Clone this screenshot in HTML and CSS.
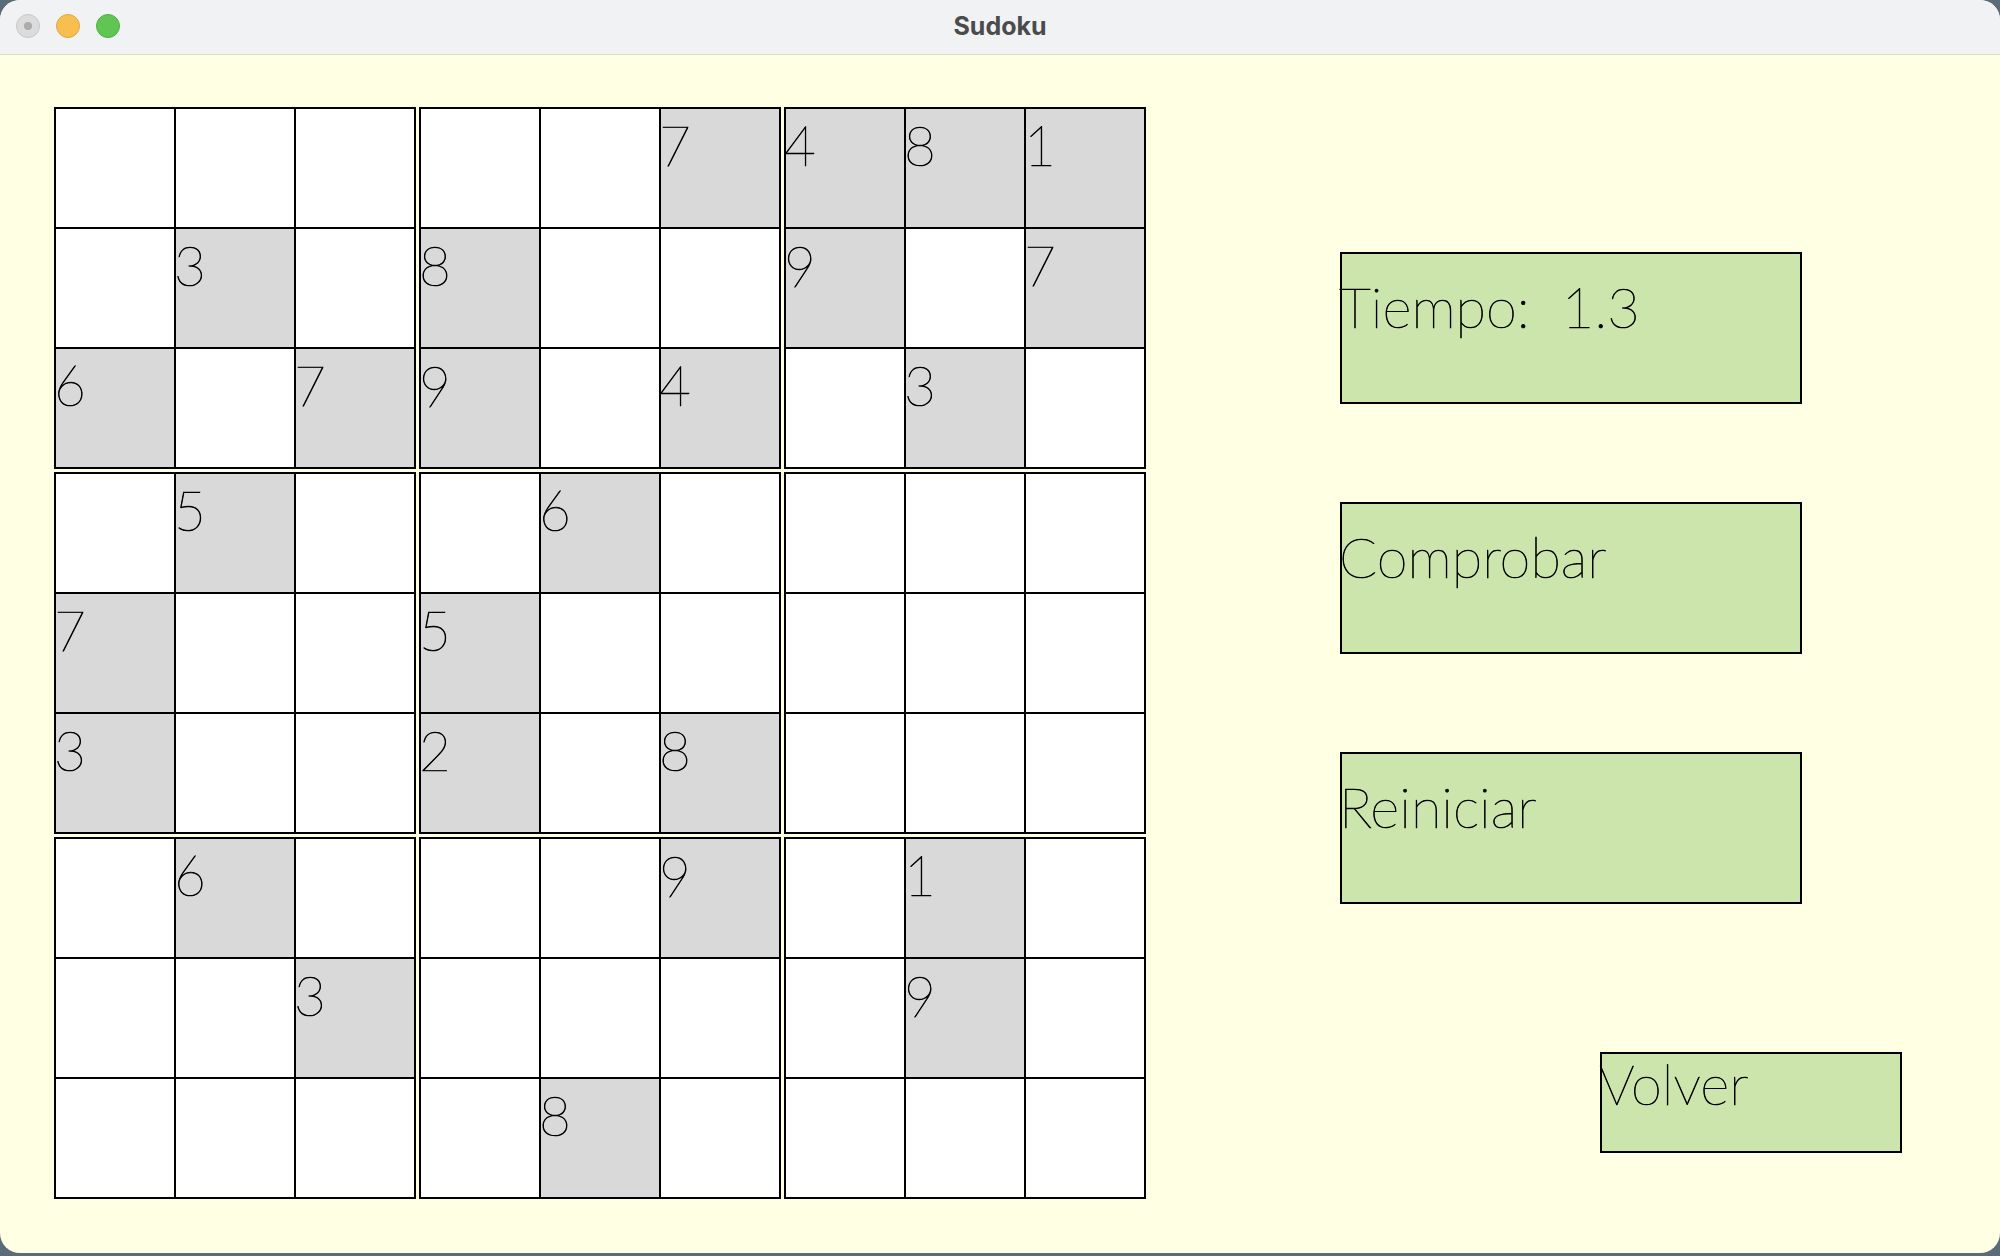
FILE: index.html
```html
<!DOCTYPE html>
<html lang="es">
<head>
<meta charset="utf-8">
<title>Sudoku</title>
<link rel="stylesheet" href="styles.css">
</head>
<body>
<div class="window">
  <div class="titlebar">
    <div class="lights">
      <span class="light close"><span class="dot"></span></span>
      <span class="light min"></span>
      <span class="light max"></span>
    </div>
    <div class="title">Sudoku</div>
  </div>
  <div class="content">
    <div class="board">
      <div class="block">
        <div class="cell"></div><div class="cell"></div><div class="cell"></div>
        <div class="cell"></div><div class="cell given">3</div><div class="cell"></div>
        <div class="cell given">6</div><div class="cell"></div><div class="cell given">7</div>
      </div>
      <div class="block">
        <div class="cell"></div><div class="cell"></div><div class="cell given">7</div>
        <div class="cell given">8</div><div class="cell"></div><div class="cell"></div>
        <div class="cell given">9</div><div class="cell"></div><div class="cell given">4</div>
      </div>
      <div class="block">
        <div class="cell given">4</div><div class="cell given">8</div><div class="cell given">1</div>
        <div class="cell given">9</div><div class="cell"></div><div class="cell given">7</div>
        <div class="cell"></div><div class="cell given">3</div><div class="cell"></div>
      </div>
      <div class="block">
        <div class="cell"></div><div class="cell given">5</div><div class="cell"></div>
        <div class="cell given">7</div><div class="cell"></div><div class="cell"></div>
        <div class="cell given">3</div><div class="cell"></div><div class="cell"></div>
      </div>
      <div class="block">
        <div class="cell"></div><div class="cell given">6</div><div class="cell"></div>
        <div class="cell given">5</div><div class="cell"></div><div class="cell"></div>
        <div class="cell given">2</div><div class="cell"></div><div class="cell given">8</div>
      </div>
      <div class="block">
        <div class="cell"></div><div class="cell"></div><div class="cell"></div>
        <div class="cell"></div><div class="cell"></div><div class="cell"></div>
        <div class="cell"></div><div class="cell"></div><div class="cell"></div>
      </div>
      <div class="block">
        <div class="cell"></div><div class="cell given">6</div><div class="cell"></div>
        <div class="cell"></div><div class="cell"></div><div class="cell given">3</div>
        <div class="cell"></div><div class="cell"></div><div class="cell"></div>
      </div>
      <div class="block">
        <div class="cell"></div><div class="cell"></div><div class="cell given">9</div>
        <div class="cell"></div><div class="cell"></div><div class="cell"></div>
        <div class="cell"></div><div class="cell given">8</div><div class="cell"></div>
      </div>
      <div class="block">
        <div class="cell"></div><div class="cell given">1</div><div class="cell"></div>
        <div class="cell"></div><div class="cell given">9</div><div class="cell"></div>
        <div class="cell"></div><div class="cell"></div><div class="cell"></div>
      </div>
    </div>
    <div class="panel">
      <div class="box timer">Tiempo:&nbsp;&nbsp;1.3</div>
      <div class="box action">Comprobar</div>
      <div class="box action">Reiniciar</div>
      <div class="box back">Volver</div>
    </div>
  </div>
</div>
</body>
</html>
```

FILE: styles.css
```css
html, body {
  margin: 0;
  padding: 0;
}
body {
  width: 2000px;
  height: 1256px;
  background: #5a6b79;
  overflow: hidden;
}
.window {
  width: 2000px;
  height: 1253px;
  border-radius: 20px;
  overflow: hidden;
  background: #ffffe3;
  display: flex;
  flex-direction: column;
}
.titlebar {
  height: 54px;
  flex: none;
  background: #f1f2f4;
  border-bottom: 1px solid #dcdcc8;
  display: flex;
  align-items: center;
  justify-content: center;
  position: relative;
}
.lights {
  position: absolute;
  left: 16px;
  top: 14px;
  display: flex;
  gap: 16px;
}
.light {
  width: 24px;
  height: 24px;
  border-radius: 50%;
  box-sizing: border-box;
  display: flex;
  align-items: center;
  justify-content: center;
}
.light.close {
  background: #dcdcdc;
  border: 1px solid #c6c6c6;
}
.light.close .dot {
  width: 8px;
  height: 8px;
  border-radius: 50%;
  background: #acacac;
}
.light.min {
  background: #f6bf50;
  border: 1px solid #e0a73c;
}
.light.max {
  background: #61c554;
  border: 1px solid #4fae43;
}
.title {
  font-family: Inter, "Liberation Sans", sans-serif;
  font-weight: 700;
  font-size: 25px;
  color: #4b4b4b;
  margin-top: -2px;
}
.content {
  flex: 1;
  display: flex;
  align-items: flex-start;
  padding: 52px 0 0 54px;
}
.board {
  display: grid;
  grid-template-columns: repeat(3, 362px);
  grid-template-rows: repeat(3, 362px);
  gap: 3px;
}
.block {
  display: grid;
  grid-template-columns: repeat(3, 118px);
  grid-template-rows: repeat(3, 118px);
  gap: 2px;
  background: #000;
  border: 2px solid #000;
}
.cell {
  background: #ffffff;
  font-family: Lato, "Noto Sans", sans-serif;
  font-weight: 100;
  -webkit-text-stroke: 0.7px #000;
  font-size: 55px;
  line-height: 1;
  color: #000;
  padding: 9px 0 0 0;
  text-indent: -2px;
  box-sizing: border-box;
}
.cell.given {
  background: #d9d9d9;
}
.panel {
  margin-left: 194px;
  display: flex;
  flex-direction: column;
  align-items: flex-start;
}
.box {
  box-sizing: border-box;
  background: #cbe5ad;
  border: 2px solid #000;
  font-family: Lato, "Noto Sans", sans-serif;
  font-weight: 100;
  -webkit-text-stroke: 0.7px #000;
  font-size: 56px;
  line-height: 1;
  color: #000;
  white-space: nowrap;
  text-indent: -3px;
}
.box.timer, .box.action {
  width: 462px;
  height: 152px;
  padding: 25px 0 0 0;
}
.box.timer {
  margin-top: 145px;
}
.box.action {
  margin-top: 98px;
}
.box.back {
  width: 302px;
  height: 101px;
  margin-top: 148px;
  margin-left: 260px;
  padding: 2px 0 0 0;
}
```
